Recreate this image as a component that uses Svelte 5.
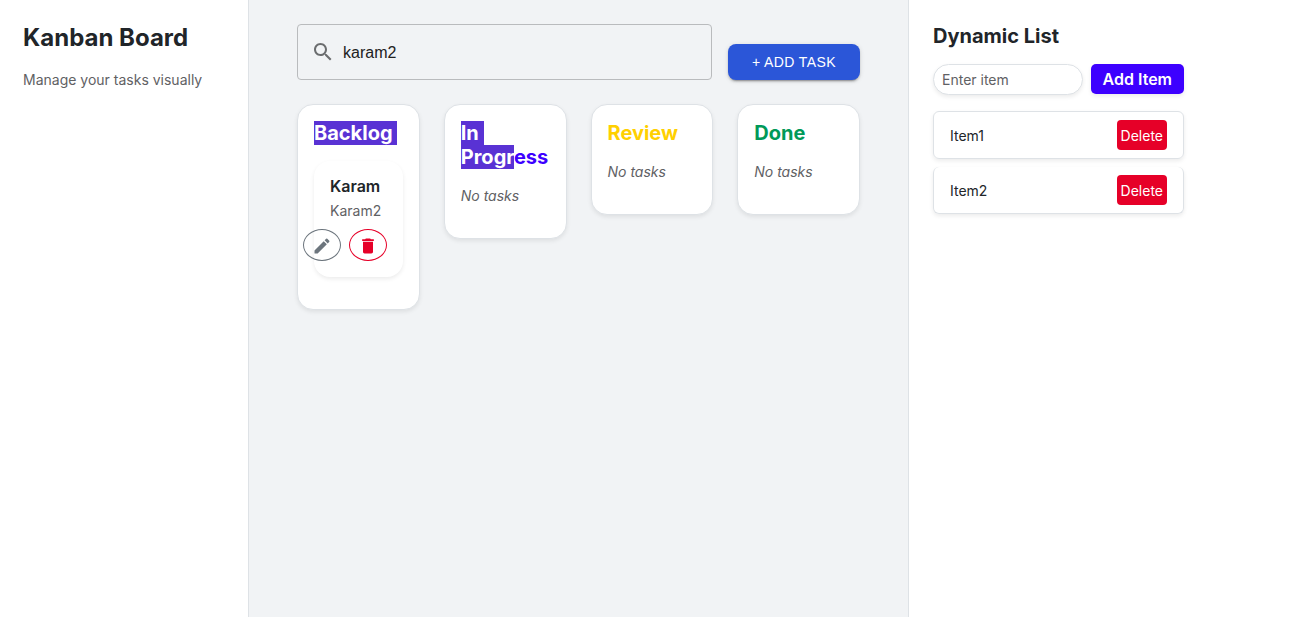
<script>
  let search = $state('karam2');
  let newItem = $state('');
  let items = $state(['Item1', 'Item2']);

  const columns = [
    { tone: 'backlog', marked: 'Backlog ', rest: '', tasks: [{ title: 'Karam', text: 'Karam2' }] },
    { tone: 'progress', marked: 'In Progr', rest: 'ess', tasks: [] },
    { tone: 'review', marked: '', rest: 'Review', tasks: [] },
    { tone: 'done', marked: '', rest: 'Done', tasks: [] }
  ];

  function addItem(event) {
    event.preventDefault();
    if (newItem.trim()) {
      items.push(newItem.trim());
      newItem = '';
    }
  }
</script>

<div class="app">
  <aside class="sidebar">
    <h1>Kanban Board</h1>
    <p>Manage your tasks visually</p>
  </aside>

  <main class="board">
    <div class="toolbar">
      <label class="search">
        <svg viewBox="0 0 24 24" width="24" height="24" aria-hidden="true">
          <path d="M15.5 14h-.79l-.28-.27C15.41 12.59 16 11.11 16 9.5 16 5.91 13.09 3 9.5 3S3 5.91 3 9.5 5.91 16 9.5 16c1.61 0 3.09-.59 4.23-1.57l.27.28v.79l5 4.99L20.49 19l-4.99-5zm-6 0C7.01 14 5 11.99 5 9.5S7.01 5 9.5 5 14 7.01 14 9.5 11.99 14 9.5 14z" />
        </svg>
        <input type="text" aria-label="Search tasks" bind:value={search} />
      </label>
      <button class="add-task" type="button">+ Add Task</button>
    </div>

    <div class="columns">
      {#each columns as column}
        <section class="column">
          <h2 class={column.tone}>{#if column.marked}<span class="marked">{column.marked}</span>{/if}{column.rest}</h2>
          {#each column.tasks as task}
            <article class="task">
              <h3>{task.title}</h3>
              <p>{task.text}</p>
              <div class="actions">
                <button class="edit" type="button" aria-label="Edit">
                  <svg viewBox="0 0 24 24" width="20" height="20" aria-hidden="true">
                    <path d="M3 17.25V21h3.75L17.81 9.94l-3.75-3.75L3 17.25zM20.71 7.04c.39-.39.39-1.02 0-1.41l-2.34-2.34a.9959.9959 0 0 0-1.41 0l-1.83 1.83 3.75 3.75 1.83-1.83z" />
                  </svg>
                </button>
                <button class="remove" type="button" aria-label="Delete">
                  <svg viewBox="0 0 24 24" width="20" height="20" aria-hidden="true">
                    <path d="M6 19c0 1.1.9 2 2 2h8c1.1 0 2-.9 2-2V7H6v12zM19 4h-3.500l-1-1h-5l-1 1H5v2h14V4z" />
                  </svg>
                </button>
              </div>
            </article>
          {:else}
            <p class="empty">No tasks</p>
          {/each}
        </section>
      {/each}
    </div>
  </main>

  <aside class="panel">
    <div class="list">
      <h2>Dynamic List</h2>
      <form onsubmit={addItem}>
        <input type="text" placeholder="Enter item" aria-label="Enter item" bind:value={newItem} />
        <button type="submit">Add Item</button>
      </form>
      <ul>
        {#each items as item, i}
          <li>
            <span>{item}</span>
            <button type="button" onclick={() => items.splice(i, 1)}>Delete</button>
          </li>
        {/each}
      </ul>
    </div>
  </aside>
</div>

<style>
  :global(body) {
    margin: 0;
    font-family: Inter, "Liberation Sans", sans-serif;
    font-size: 14px;
    line-height: 21px;
    color: #212529;
    background: #fff;
  }

  .app {
    display: grid;
    grid-template-columns: 249px minmax(0, 1fr) 385px;
    min-height: 100vh;
  }

  .app * {
    box-sizing: border-box;
  }

  h1, h2, h3, p, ul {
    margin: 0;
  }

  button, input {
    font: inherit;
  }

  button {
    cursor: pointer;
  }

  svg {
    display: block;
    flex: none;
    fill: currentColor;
  }

  .sidebar {
    padding: 23px;
    border-right: 1px solid #dee2e6;
  }

  h1 {
    margin-bottom: 16px;
    font-size: 24px;
    line-height: 30px;
    font-weight: 700;
  }

  .sidebar p {
    color: #5f6164;
  }

  .board {
    padding: 24px 48px;
    background: #f1f3f5;
  }

  .toolbar {
    display: flex;
    align-items: flex-end;
    gap: 16px;
    margin-bottom: 24px;
  }

  .search {
    display: flex;
    flex: 1;
    align-items: center;
    gap: 8px;
    min-width: 0;
    height: 56px;
    padding: 0 13px;
    border: 1px solid #b9bbbd;
    border-radius: 4px;
    color: #6b6d6f;
  }

  .search input {
    flex: 1;
    min-width: 0;
    height: 23px;
    padding: 0;
    border: 0;
    outline: 0;
    background: none;
    color: #212121;
    font-family: "Liberation Sans", sans-serif;
    font-size: 16px;
    line-height: 23px;
  }

  .add-task {
    height: 36px;
    padding: 0 24px;
    border: 0;
    border-radius: 8px;
    background: #2b56d8;
    color: #fff;
    font-family: "Liberation Sans", sans-serif;
    line-height: 24px;
    letter-spacing: 0.02857em;
    text-transform: uppercase;
    white-space: nowrap;
    box-shadow: 0 3px 1px -2px rgb(0 0 0 / 20%), 0 2px 2px rgb(0 0 0 / 14%), 0 1px 5px rgb(0 0 0 / 12%);
  }

  .columns {
    display: grid;
    grid-template-columns: repeat(4, minmax(0, 1fr));
    align-items: start;
    gap: 24px;
  }

  .column {
    padding: 16px;
    border: 1px solid #dee2e6;
    border-radius: 16px;
    background: #fff;
    box-shadow: 0 2px 4px rgb(0 0 0 / 8%);
  }

  h2 {
    margin-bottom: 16px;
    font-size: 20px;
    line-height: 24px;
    font-weight: 700;
  }

  .marked {
    background: #5932d4;
    color: #fff;
    white-space: break-spaces;
  }

  .progress {
    color: #3d00ff;
  }

  .review {
    color: #ffd000;
  }

  .done {
    color: #009959;
  }

  .empty {
    margin-bottom: 16px;
    color: #5f6164;
    font-style: italic;
  }

  .task {
    margin-bottom: 16px;
    padding: 16px;
    border-radius: 16px;
    box-shadow: 0 2px 4px rgb(0 0 0 / 8%);
  }

  h3 {
    margin-bottom: 4px;
    font-size: 16px;
    line-height: 19px;
    font-weight: 600;
  }

  .task p {
    margin-bottom: 8px;
    color: #5f6164;
  }

  .actions {
    display: flex;
    justify-content: flex-end;
    gap: 8px;
  }

  .actions button {
    flex: none;
    padding: 6px 8px 4px;
    border: 1px solid currentColor;
    border-radius: 50%;
    background: none;
  }

  .edit {
    color: #6c757d;
  }

  .remove {
    color: #e60028;
  }

  .panel {
    padding: 24px;
    border-left: 1px solid #dee2e6;
  }

  .list {
    max-width: 251px;
  }

  form {
    display: flex;
    align-items: flex-start;
    gap: 8px;
    margin-bottom: 16px;
  }

  form input {
    flex: 1;
    min-width: 0;
    height: 31px;
    padding: 0 8px;
    border: 1px solid #dee2e6;
    border-radius: 16px;
    color: #212529;
    box-shadow: 0 2px 4px rgb(0 0 0 / 8%);
  }

  form input::placeholder {
    color: #5f6164;
    opacity: 1;
  }

  form button {
    height: 30px;
    padding: 0 12px;
    border: 0;
    border-radius: 5px;
    background: #3d00ff;
    color: #fff;
    font-size: 16px;
    font-weight: 600;
    white-space: nowrap;
    box-shadow: 0 2px 4px rgb(0 0 0 / 8%);
  }

  ul {
    display: grid;
    gap: 8px;
    padding: 0;
    list-style: none;
  }

  li {
    display: flex;
    align-items: center;
    justify-content: space-between;
    padding: 8px 16px;
    border: 1px solid #dee2e6;
    border-radius: 6px;
    box-shadow: 0 2px 4px rgb(0 0 0 / 8%);
  }

  li + li {
    border-top: 0;
  }

  li button {
    height: 30px;
    padding: 0 4px;
    border: 0;
    border-radius: 4px;
    background: #e60028;
    color: #fff;
  }
</style>
